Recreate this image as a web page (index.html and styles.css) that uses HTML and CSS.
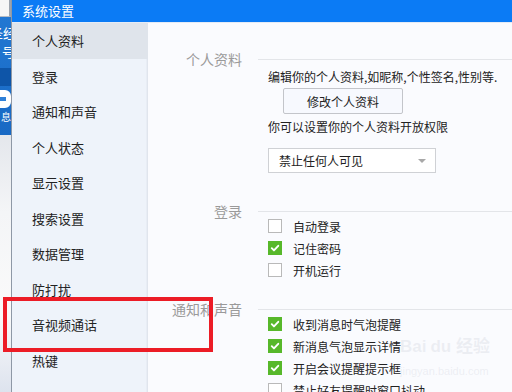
FILE: index.html
```html
<!DOCTYPE html>
<html lang="zh-CN">
<head>
    <meta charset="UTF-8">
    <title>系统设置</title>
    <link rel="stylesheet" href="styles.css">
</head>
<body>
<div class="screen">
    <div class="behind">
        <div class="b-top"></div>
        <div class="b-blue">
            <div class="b-char b-c1">圣经</div>
            <div class="b-char b-c2">号</div>
            <div class="b-band"></div>
            <div class="b-pill"></div>
            <div class="b-char b-c3">息</div>
        </div>
        <div class="b-rest"></div>
    </div>

    <div class="dialog">
        <div class="titlebar">系统设置</div>
        <div class="main">
            <ul class="nav">
                <li class="active">个人资料</li>
                <li>登录</li>
                <li>通知和声音</li>
                <li>个人状态</li>
                <li>显示设置</li>
                <li>搜索设置</li>
                <li>数据管理</li>
                <li>防打扰</li>
                <li>音视频通话</li>
                <li>热键</li>
            </ul>

            <div class="content">
                <section class="group group-profile">
                    <div class="group-head"><span class="group-label">个人资料</span><span class="rule"></span></div>
                    <div class="group-body">
                        <div class="line">编辑你的个人资料,如昵称,个性签名,性别等.</div>
                        <button class="btn">修改个人资料</button>
                        <div class="line line-2">你可以设置你的个人资料开放权限</div>
                        <div class="select">禁止任何人可见<span class="caret"></span></div>
                    </div>
                </section>

                <section class="group group-login">
                    <div class="group-head"><span class="group-label">登录</span><span class="rule"></span></div>
                    <div class="group-body">
                        <label class="check"><span class="box"></span>自动登录</label>
                        <label class="check"><span class="box on"><svg viewBox="0 0 14 14"><path d="M3.2 7.2l2.6 2.6 5-5.4" /></svg></span>记住密码</label>
                        <label class="check"><span class="box"></span>开机运行</label>
                    </div>
                </section>

                <section class="group group-notify">
                    <div class="group-head"><span class="group-label">通知和声音</span><span class="rule"></span></div>
                    <div class="group-body">
                        <label class="check"><span class="box on"><svg viewBox="0 0 14 14"><path d="M3.2 7.2l2.6 2.6 5-5.4" /></svg></span>收到消息时气泡提醒</label>
                        <label class="check"><span class="box on"><svg viewBox="0 0 14 14"><path d="M3.2 7.2l2.6 2.6 5-5.4" /></svg></span>新消息气泡显示详情</label>
                        <label class="check"><span class="box on"><svg viewBox="0 0 14 14"><path d="M3.2 7.2l2.6 2.6 5-5.4" /></svg></span>开启会议提醒提示框</label>
                        <label class="check"><span class="box"></span>禁止好友提醒时窗口抖动</label>
                    </div>
                </section>
            </div>
        </div>
    </div>

    <div class="highlight"></div>
    <div class="watermark">
        <div class="wm-logo">Bai<span class="paw">du</span> 经验</div>
        <div class="wm-url">jingyan.baidu.com</div>
    </div>
</div>
</body>
</html>
```

FILE: styles.css
```css
* {
    box-sizing: border-box;
}
body {
    margin: 0;
    font-family: "Noto Sans CJK SC", "Microsoft YaHei", sans-serif;
    color: #222;
    overflow: hidden;
}
.screen {
    position: relative;
    display: flex;
    width: 512px;
    height: 392px;
    overflow: hidden;
}

/* window behind the dialog */
.behind {
    width: 11px;
    display: flex;
    flex-direction: column;
}
.b-top {
    height: 17px;
    background: #f6f6f6;
    border-right: 2px solid #9ca3ad;
    border-bottom: 1px solid #b7bcc4;
}
.b-blue {
    height: 118px;
    background: linear-gradient(#2277d2, #1869c4);
    display: flex;
    flex-direction: column;
    overflow: hidden;
}
.b-char {
    display: flex;
    justify-content: flex-end;
    color: #fff;
    font-size: 13px;
    line-height: 16px;
    white-space: nowrap;
}
.b-c1 {
    margin-top: 8px;
    margin-right: -5px;
}
.b-c2 {
    margin-top: 3px;
    margin-right: -4px;
}
.b-band {
    height: 18px;
    margin-top: 8px;
    background: #0e55a8;
}
.b-pill {
    height: 18px;
    margin-top: 4px;
    margin-left: -6px;
    border-radius: 6px;
    border: 5px solid #fff;
    border-top-width: 7px;
    border-bottom-width: 7px;
    background-clip: padding-box;
    background-color: #2f80d8;
}
.b-c3 {
    font-size: 10px;
    line-height: 14px;
    margin-top: 2px;
}
.b-rest {
    flex: 1;
    background: linear-gradient(#e4e7ec, #f4f5f7 30%, #fafafa 70%, #dde3ee);
}

/* dialog */
.dialog {
    flex: 1;
    display: flex;
    flex-direction: column;
    border-left: 1px solid #8e98a6;
}
.titlebar {
    height: 26px;
    padding-left: 10px;
    background: #0b7bf5;
    border-bottom: 1px solid #e4ebf6;
    color: #fff;
    font-size: 13px;
    line-height: 22px;
}
.main {
    flex: 1;
    display: flex;
}
.nav {
    width: 136px;
    margin: 0;
    padding: 0;
    list-style: none;
    background: #eef3fa;
    border-right: 1px solid #e0e5ed;
    box-shadow: inset -1px 0 0 #e8edf5;
}
.nav li {
    height: 35.5px;
    display: flex;
    align-items: center;
    padding-left: 20px;
    font-size: 13px;
    color: #222;
}
.nav li.active {
    background: #dfe4eb;
    margin-right: -1px;
}
.content {
    flex: 1;
    background: #fafbfe;
    padding-top: 26px;
}

/* groups */
.group-head {
    display: grid;
    grid-template-columns: 94px 1fr;
    column-gap: 16px;
    align-items: center;
    height: 14px;
}
.group-label {
    text-align: right;
    font-size: 14px;
    color: #9a9a9a;
    white-space: nowrap;
}
.rule {
    height: 1px;
    background: #e3e5e9;
}
.group-body {
    padding-left: 120px;
    font-size: 12px;
    color: #222;
}
.group-login {
    margin-top: 28px;
}
.group-notify {
    margin-top: 18px;
}
.line {
    margin-top: 4px;
    line-height: 20px;
    white-space: nowrap;
}
.line-2 {
    margin-top: 3px;
}
.btn {
    display: block;
    margin: 1px 0 0 15px;
    width: 120px;
    height: 26px;
    padding: 0;
    background: #f7f9fe;
    border: 1px solid #c3c5ca;
    border-radius: 2px;
    font-family: inherit;
    font-size: 12px;
    color: #222;
}
.select {
    position: relative;
    margin-top: 11px;
    width: 168px;
    height: 25px;
    padding-left: 10px;
    background: #fff;
    border: 1px solid #cfd1d5;
    line-height: 23px;
}
.caret {
    position: absolute;
    right: 9px;
    top: 10px;
    border-left: 4px solid transparent;
    border-right: 4px solid transparent;
    border-top: 4px solid #a8a8a8;
}
.check {
    display: flex;
    align-items: center;
    gap: 11px;
    height: 22px;
    white-space: nowrap;
}
.box {
    width: 14px;
    height: 14px;
    background: #fff;
    border: 1px solid #b9b9b9;
    display: flex;
}
.box.on {
    background: #57b82a;
    border-color: #57b82a;
}
.box svg {
    width: 12px;
    height: 12px;
    fill: none;
    stroke: #fff;
    stroke-width: 2.2;
    stroke-linecap: round;
    stroke-linejoin: round;
}

/* overlays */
.highlight {
    position: absolute;
    left: 3px;
    top: 297px;
    width: 210px;
    height: 55px;
    border: 4px solid #ec1c26;
}
.watermark {
    position: absolute;
    left: 400px;
    top: 336px;
    color: rgba(200, 204, 214, 0.28);
    font-family: "Liberation Sans", "Noto Sans CJK SC", sans-serif;
    pointer-events: none;
}
.wm-logo {
    font-size: 17px;
    font-weight: bold;
    line-height: 22px;
}
.paw {
    margin-left: 4px;
}
.wm-url {
    font-size: 11px;
    line-height: 14px;
    margin-top: 6px;
}
```
